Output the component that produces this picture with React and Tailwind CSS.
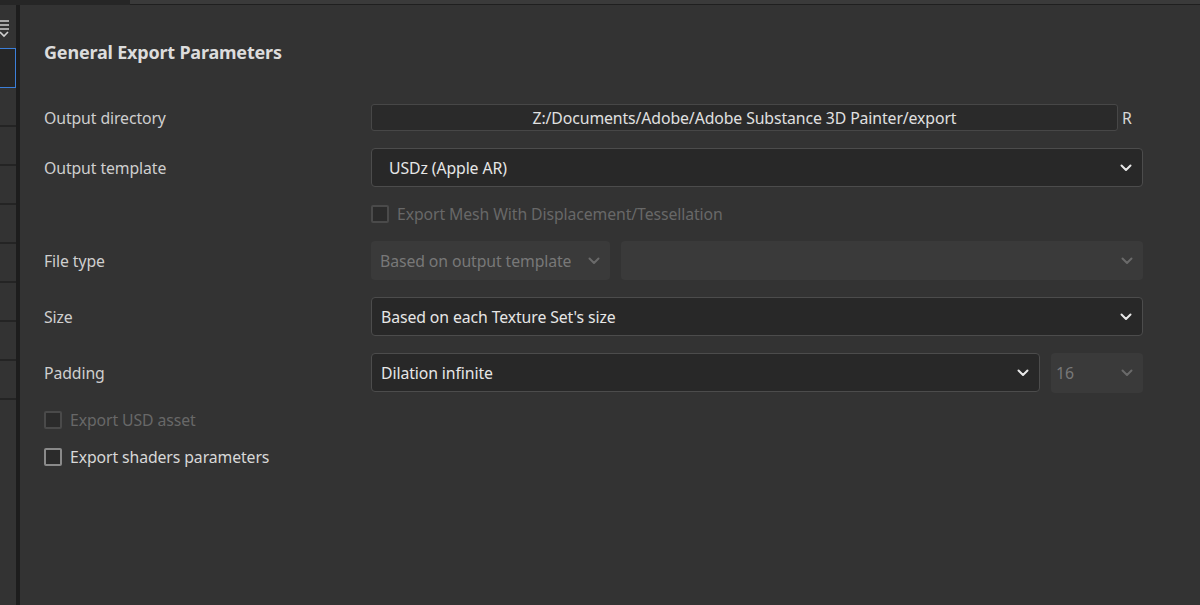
import { Fragment } from 'react'

const font = { fontFamily: '"Noto Sans", "Open Sans", sans-serif' }

function Chevron({ dim }) {
  return (
    <svg width="12" height="8" viewBox="0 0 12 8" className="shrink-0">
      <polyline
        points="1.5,1.5 6,6 10.5,1.5"
        fill="none"
        stroke={dim ? '#6a6a6a' : '#e8e8e8'}
        strokeWidth="2"
        strokeLinecap="round"
        strokeLinejoin="round"
      />
    </svg>
  )
}

function Select({ value, className = '', dim, pad = 'pl-[9px]' }) {
  return (
    <div
      className={`h-[39px] flex items-center justify-between pr-[10px] rounded-[4px] ${pad} ${
        dim ? 'bg-[#3a3a3a] text-[#787878]' : 'bg-[#282828] border border-[#4c4c4c] text-[#e6e6e6]'
      } ${className}`}
    >
      <span className="truncate pt-[2px]">{value}</span>
      <Chevron dim={dim} />
    </div>
  )
}

function Checkbox({ label, disabled }) {
  return (
    <div className={`flex items-center gap-[8px] h-[20px] ${disabled ? 'text-[#686868]' : 'text-[#d8d8d8]'}`}>
      <div
        className={`w-[18px] h-[18px] rounded-[2px] border-2 bg-[#2b2b2b] ${
          disabled ? 'border-[#4a4a4a]' : 'border-[#8a8a8a]'
        }`}
      />
      <span className="pt-[2px]">{label}</span>
    </div>
  )
}

function Row({ label, children, h = 'h-[39px]' }) {
  return (
    <div className={`flex items-center ${h}`}>
      <div className="w-[327px] shrink-0 text-[#cfcfcf] pt-[2px]">{label}</div>
      <div className="w-[772px] flex items-center">{children}</div>
    </div>
  )
}

export default function App() {
  return (
    <div className="w-[1200px] h-[605px] bg-[#333333] flex flex-col overflow-hidden text-[15.8px] tracking-[-0.1px]" style={font}>
      {/* Top strip */}
      <div className="h-[5px] flex shrink-0">
        <div className="w-[130px] bg-[#262626]" />
        <div className="flex-1 bg-[#3a3a3a] border-b border-[#1f1f1f]" />
      </div>

      <div className="flex-1 flex">
        {/* Left sidebar */}
        <div className="w-[16px] shrink-0 flex flex-col">
          <div className="h-[43px] flex items-start pt-[14px] overflow-hidden">
            <svg width="16" height="22" viewBox="0 0 16 22">
              <path d="M0 2 H9 M0 6 H9 M0 10 H9" stroke="#d0d0d0" strokeWidth="1.6" />
              <polyline points="0,13 4,17 8,13" fill="none" stroke="#d0d0d0" strokeWidth="1.6" />
            </svg>
          </div>
          <div className="h-[40px] border-[1.5px] border-l-0 border-[#3c7fd9] bg-[#262626]" />
          {[0, 1, 2, 3, 4, 5, 6, 7].map((i) => (
            <div key={i} className="h-[39px] border-b-2 border-[#242424]" />
          ))}
        </div>
        <div className="w-[4px] shrink-0 bg-[#1d1d1d]" />

        {/* Main panel */}
        <div className="flex-1 pl-[24px] pt-[36px]">
          <div className="h-[22px] flex items-center pt-[1px] font-bold text-[18px] tracking-[-0.2px] text-[#dcdcdc]">General Export Parameters</div>

          <div className="mt-[41px] flex flex-col gap-[17px]">
            <Row label="Output directory" h="h-[27px]">
              <div className="flex-1 h-[27px] pt-[2px] rounded-[3px] bg-[#2a2a2a] border border-[#474747] flex items-center justify-center text-[#e0e0e0]">
                Z:/Documents/Adobe/Adobe Substance 3D Painter/export
              </div>
              <div className="w-[25px] pl-[4px] pt-[2px] text-[#d8d8d8]">R</div>
            </Row>

            <Row label="Output template">
              <Select value="USDz (Apple AR)" pad="pl-[17px]" className="w-full" />
            </Row>

            <Row label="" h="h-[20px]">
              <Checkbox label="Export Mesh With Displacement/Tessellation" disabled />
            </Row>

            <Row label="File type">
              <Select value="Based on output template" dim className="w-[239px]" />
              <Select value="" dim className="ml-[11px] flex-1" />
            </Row>

            <Row label="Size">
              <Select value="Based on each Texture Set's size" className="w-full" />
            </Row>

            <Row label="Padding">
              <Select value="Dilation infinite" className="w-[669px]" />
              <Select value="16" dim pad="pl-[5px]" className="ml-[11px] flex-1 h-[40px]" />
            </Row>

            <div className="flex flex-col gap-[17px] pt-[1px]">
              <Checkbox label="Export USD asset" disabled />
              <Checkbox label="Export shaders parameters" />
            </div>
          </div>
        </div>
      </div>
    </div>
  )
}
